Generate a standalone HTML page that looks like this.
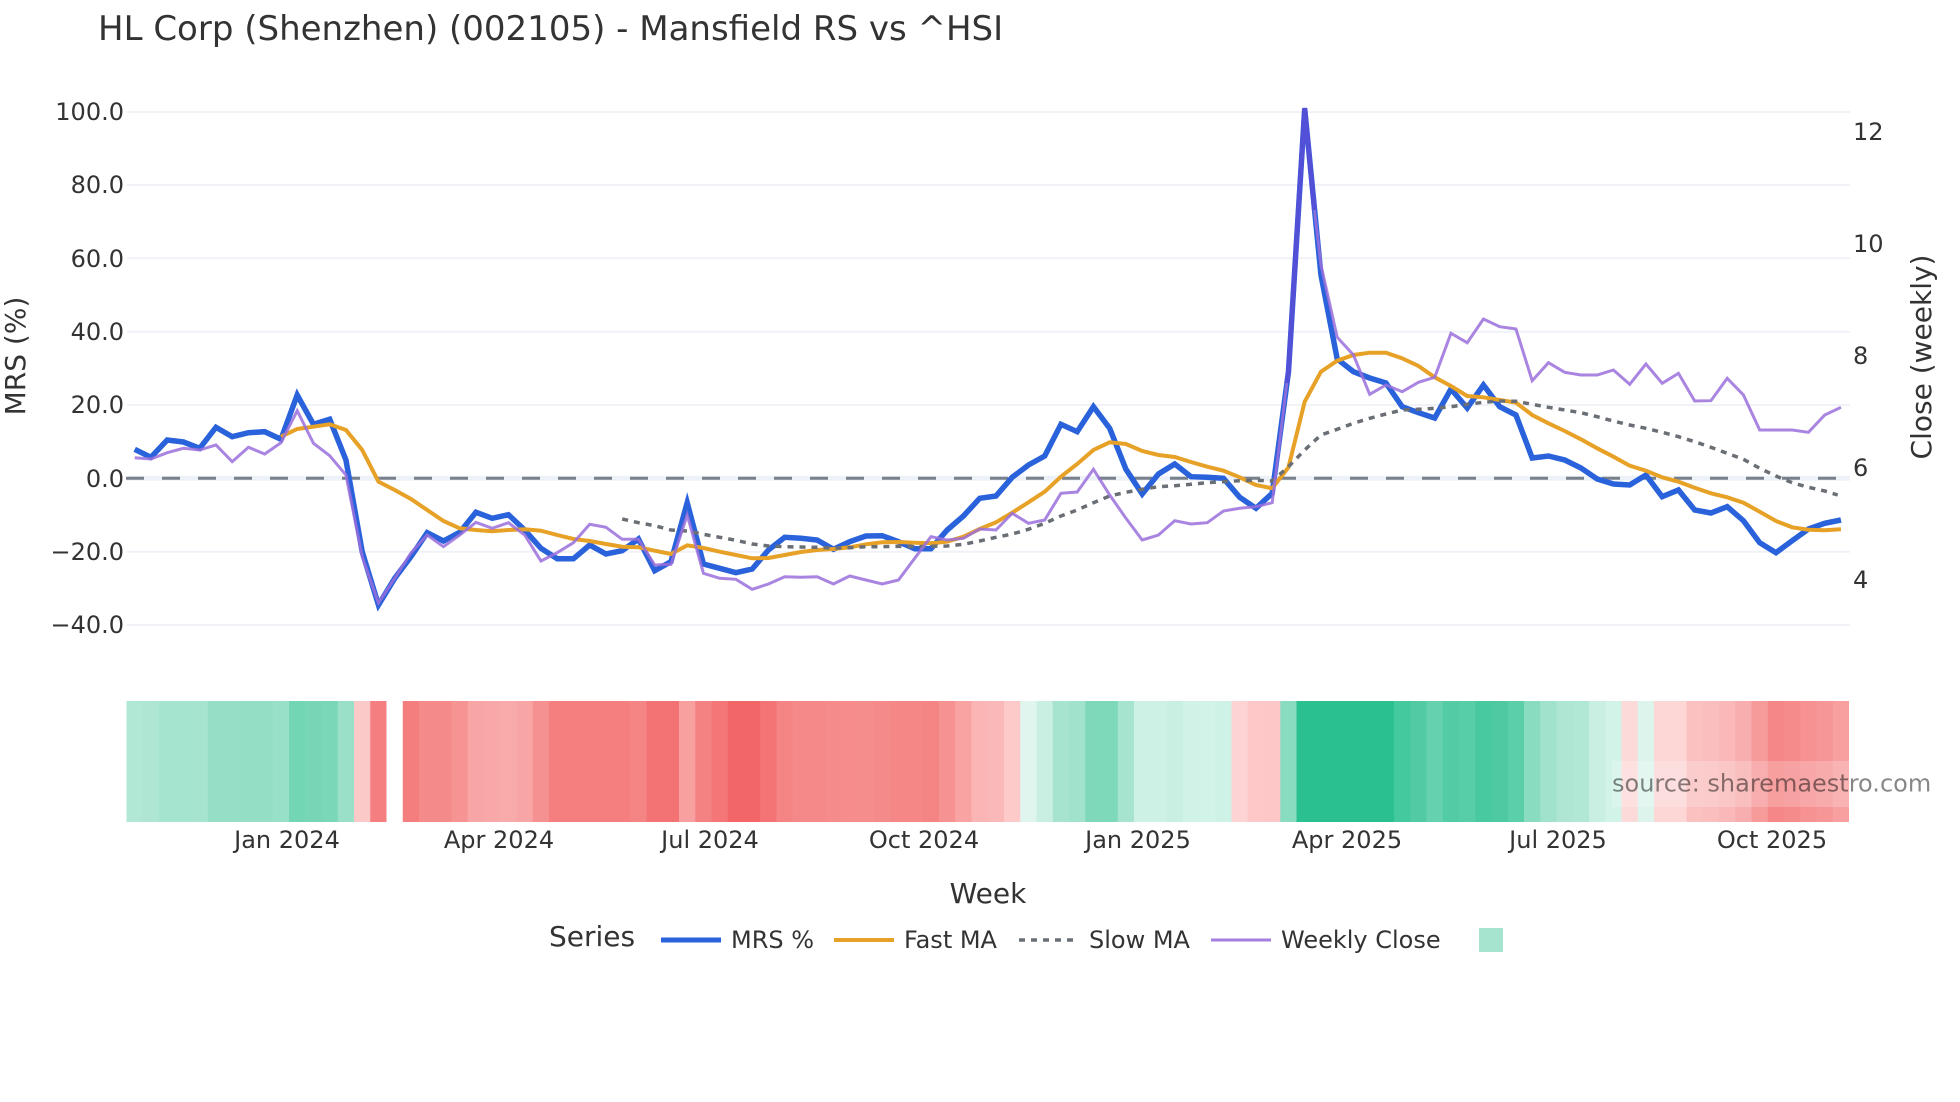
<!DOCTYPE html>
<html><head><meta charset="utf-8"><style>
html,body{margin:0;padding:0;background:#fff;width:1960px;height:1102px;overflow:hidden}
svg{display:block}
text{font-family:"DejaVu Sans","Liberation Sans",sans-serif;fill:#333}
.t{font-size:24px}
.line{fill:none;vector-effect:non-scaling-stroke;stroke-linejoin:miter;stroke-miterlimit:10}
</style></head><body>
<svg width="1960" height="1102" viewBox="0 0 1960 1102" xmlns="http://www.w3.org/2000/svg">
<rect width="1960" height="1102" fill="#fff"/>
<text x="98" y="40" font-size="34">HL Corp (Shenzhen) (002105) - Mansfield RS vs ^HSI</text>
<g stroke="#f0f2f7" stroke-width="2">
<path d="M127 112H1850M127 185H1850M127 258.3H1850M127 331.7H1850M127 405H1850M127 551.7H1850M127 625H1850"/>
</g>
<path d="M127 478.3H1850" stroke="#edf2f9" stroke-width="5"/>
<path d="M126 478.3H1850" stroke="#78808c" stroke-width="3" stroke-dasharray="18 18"/>
<g class="t" text-anchor="end">
<text x="124" y="120">100.0</text>
<text x="124" y="193">80.0</text>
<text x="124" y="267">60.0</text>
<text x="124" y="340">40.0</text>
<text x="124" y="413">20.0</text>
<text x="124" y="487">0.0</text>
<text x="124" y="560">−20.0</text>
<text x="124" y="633">−40.0</text>
</g>
<g class="t">
<text x="1853" y="140">12</text>
<text x="1853" y="252">10</text>
<text x="1853" y="364">8</text>
<text x="1853" y="476">6</text>
<text x="1853" y="588">4</text>
</g>
<text transform="translate(25,356) rotate(-90)" font-size="28" text-anchor="middle">MRS (%)</text>
<text transform="translate(1931,357) rotate(-90)" font-size="28" text-anchor="middle">Close (weekly)</text>

<g transform="translate(126.5,701) scale(16.25,121)">
<rect x="0" width="1.03" height="1" fill="#b0e7d5"/><rect x="1" width="1.03" height="1" fill="#aee6d3"/><rect x="2" width="1.03" height="1" fill="#a5e4cf"/><rect x="3" width="1.03" height="1" fill="#a5e4cf"/><rect x="4" width="1.03" height="1" fill="#a7e4d0"/><rect x="5" width="1.03" height="1" fill="#96dfc6"/><rect x="6" width="1.03" height="1" fill="#96dfc6"/><rect x="7" width="1.03" height="1" fill="#94dec5"/><rect x="8" width="1.03" height="1" fill="#94dec5"/><rect x="9" width="1.03" height="1" fill="#99e0c8"/>
<rect x="10" width="1.03" height="1" fill="#72d5b4"/><rect x="11" width="1.03" height="1" fill="#78d6b7"/><rect x="12" width="1.03" height="1" fill="#7ad7b8"/><rect x="13" width="1.03" height="1" fill="#9ae0c9"/><rect x="14" width="1.03" height="1" fill="#fcc9c9"/><rect x="15" width="1" height="1" fill="#f57f80"/>
<rect x="17" width="1.03" height="1" fill="#f47d7e"/><rect x="18" width="1.03" height="1" fill="#f58a8a"/><rect x="19" width="1.03" height="1" fill="#f58a8a"/><rect x="20" width="1.03" height="1" fill="#f69393"/><rect x="21" width="1.03" height="1" fill="#f8a5a5"/><rect x="22" width="1.03" height="1" fill="#f8a8a8"/><rect x="23" width="1.03" height="1" fill="#f9abab"/><rect x="24" width="1.03" height="1" fill="#f8a5a5"/><rect x="25" width="1.03" height="1" fill="#f69191"/><rect x="26" width="1.03" height="1" fill="#f57f7f"/><rect x="27" width="1.03" height="1" fill="#f57e7e"/><rect x="28" width="1.03" height="1" fill="#f57f7f"/><rect x="29" width="1.03" height="1" fill="#f57f7f"/><rect x="30" width="1.03" height="1" fill="#f57f7f"/><rect x="31" width="1.03" height="1" fill="#f58585"/><rect x="32" width="1.03" height="1" fill="#f37273"/><rect x="33" width="1.03" height="1" fill="#f37273"/><rect x="34" width="1.03" height="1" fill="#f8a0a0"/><rect x="35" width="1.03" height="1" fill="#f58282"/><rect x="36" width="1.03" height="1" fill="#f47677"/><rect x="37" width="1.03" height="1" fill="#f26667"/><rect x="38" width="1.03" height="1" fill="#f26667"/><rect x="39" width="1.03" height="1" fill="#f47475"/><rect x="40" width="1.03" height="1" fill="#f58585"/><rect x="41" width="1.03" height="1" fill="#f58888"/><rect x="42" width="1.03" height="1" fill="#f58888"/><rect x="43" width="1.03" height="1" fill="#f68b8b"/><rect x="44" width="1.03" height="1" fill="#f68c8c"/><rect x="45" width="1.03" height="1" fill="#f68d8d"/><rect x="46" width="1.03" height="1" fill="#f58a8a"/><rect x="47" width="1.03" height="1" fill="#f58787"/><rect x="48" width="1.03" height="1" fill="#f58787"/><rect x="49" width="1.03" height="1" fill="#f58585"/><rect x="50" width="1.03" height="1" fill="#f69292"/><rect x="51" width="1.03" height="1" fill="#f9a3a3"/><rect x="52" width="1.03" height="1" fill="#fbb5b5"/><rect x="53" width="1.03" height="1" fill="#fbb8b8"/><rect x="54" width="1.03" height="1" fill="#fdc9c9"/>
<rect x="55" width="1.03" height="1" fill="#dff5ee"/><rect x="56" width="1.03" height="1" fill="#c8efe2"/><rect x="57" width="1.03" height="1" fill="#a6e4d0"/><rect x="58" width="1.03" height="1" fill="#a0e2cc"/><rect x="59" width="1.03" height="1" fill="#7fd8ba"/><rect x="60" width="1.03" height="1" fill="#7ed8ba"/><rect x="61" width="1.03" height="1" fill="#a6e4d0"/><rect x="62" width="1.03" height="1" fill="#cdf1e5"/><rect x="63" width="1.03" height="1" fill="#cef1e6"/><rect x="64" width="1.03" height="1" fill="#c9efe3"/><rect x="65" width="1.03" height="1" fill="#d0f2e7"/><rect x="66" width="1.03" height="1" fill="#d2f3e8"/><rect x="67" width="1.03" height="1" fill="#cff2e6"/><rect x="68" width="1.03" height="1" fill="#fdd3d3"/><rect x="69" width="1.03" height="1" fill="#fec8c8"/><rect x="70" width="1.03" height="1" fill="#fec7c7"/><rect x="71" width="1.03" height="1" fill="#8adcc0"/>
<rect x="72" width="6.03" height="1" fill="#2bc08f"/><rect x="78" width="1.03" height="1" fill="#44c89d"/><rect x="79" width="1.03" height="1" fill="#52cba5"/><rect x="80" width="1.03" height="1" fill="#66d1af"/><rect x="81" width="1.03" height="1" fill="#53cca6"/><rect x="82" width="1.03" height="1" fill="#57cda8"/><rect x="83" width="1.03" height="1" fill="#48c9a0"/><rect x="84" width="1.03" height="1" fill="#4ec9a2"/><rect x="85" width="1.03" height="1" fill="#5bcfaa"/><rect x="86" width="1.03" height="1" fill="#8adcc0"/><rect x="87" width="1.03" height="1" fill="#a0e2cc"/><rect x="88" width="1.03" height="1" fill="#aee6d3"/><rect x="89" width="1.03" height="1" fill="#b0e7d5"/><rect x="90" width="1.03" height="1" fill="#c9efe3"/><rect x="91" width="1.03" height="1" fill="#d2f3e8"/><rect x="92" width="1.03" height="1" fill="#fddada"/><rect x="93" width="1.03" height="1" fill="#ddf4ec"/><rect x="94" width="1.03" height="1" fill="#fdd6d6"/><rect x="95" width="1.03" height="1" fill="#fdd6d6"/><rect x="96" width="1.03" height="1" fill="#fbc0c0"/><rect x="97" width="1.03" height="1" fill="#fabebe"/><rect x="98" width="1.03" height="1" fill="#fab8b8"/><rect x="99" width="1.03" height="1" fill="#f8aeae"/><rect x="100" width="1.03" height="1" fill="#f79a9a"/><rect x="101" width="1.03" height="1" fill="#f58788"/><rect x="102" width="1.03" height="1" fill="#f58b8b"/><rect x="103" width="1.03" height="1" fill="#f69292"/><rect x="104" width="1.03" height="1" fill="#f79696"/><rect x="105" width="1" height="1" fill="#f8a0a0"/>
</g>
<rect x="1612" y="761" width="238" height="46" fill="#fff" fill-opacity=".2"/>

<g transform="translate(134.7,0) scale(16.25,1)">
<polyline class="line" stroke="#2962db" stroke-width="5.5" points="0,449.3 1,457.3 2,440 3,442 4,448.3 5,427.3 6,436.7 7,432.7 8,431.7 9,439.3 10,395 11,424.3 12,419.3 13,460 14,551.7 15,605 16,578.3 17,556.7 18,532.7 19,541 20,532.3 21,512.3 22,518.3 23,514.7 24,530 25,548.3 26,558.7 27,558.7 28,545 29,554 30,550.7 31,539 32,570.7 33,561.7 34,502.7 35,564 36,568.3 37,572.7 38,569 39,550 40,537.3 41,538.3 42,540 43,549.3 44,541.7 45,536 46,535.7 47,541.7 48,548.7 49,548.7 50,530 51,516 52,498.3 53,496 54,477.3 55,465 56,456 57,424.3 58,431.7 59,406.7 60,428.3 61,469.3 62,494 63,474 64,464 65,476.7 66,477.3 67,478.3 68,497.3 69,508.3 70,493.3 71,372 72,109 73,275 74,359 75,371.7 76,378 77,383 78,406.7 79,412.7 80,418 81,389 82,408 83,385 84,406.7 85,415 86,458 87,456 88,460 89,468 90,479 91,484 92,485 93,475 94,496.7 95,490 96,510 97,513 98,506.7 99,520.7 100,542.7 101,552.7 102,540.7 103,529 104,523.3 105,520"/>
<polyline class="line" stroke="#e6a126" stroke-width="4" points="9,436.7 10,429 11,426.7 12,424.3 13,430 14,450 15,481.7 16,490 17,499 18,510 19,521 20,528.3 21,530 22,531.3 23,530 24,529.3 25,530.7 26,535 27,539 28,541 29,544 30,546.7 31,547.3 32,550.7 33,554 34,545.3 35,548 36,551.7 37,555 38,558.3 39,558 40,555 41,552 42,550 43,549 44,547.3 45,544.3 46,542.3 47,542 48,542.7 49,543.3 50,541.7 51,536.7 52,529 53,522.3 54,512.7 55,502.3 56,491.7 57,476.7 58,464 59,450 60,442.3 61,444 62,451 63,455 64,457 65,462 66,466.7 67,470.7 68,477.3 69,485 70,488.3 71,467.3 72,401.7 73,371.7 74,360.7 75,355 76,352.7 77,352.7 78,358.3 79,366 80,377.3 81,386 82,396 83,397.3 84,400 85,402.7 86,415 87,423.3 88,431 89,439.3 90,448.3 91,456.7 92,465.7 93,470.7 94,477.3 95,481.7 96,487.7 97,493.3 98,497.3 99,502.7 100,511.7 101,521 102,527.3 103,529.7 104,530.3 105,529.3"/>
<polyline class="line" stroke="#6a6e75" stroke-width="3.5" stroke-dasharray="6 6" points="30,519 31,522.7 32,525.7 33,530 34,531 35,534.3 36,537.3 37,540.3 38,544 39,546 40,546.7 41,547 42,547.3 43,548 44,547.7 45,546.7 46,546.7 47,546.3 48,546.7 49,546.3 50,546 51,544.3 52,541 53,537.3 54,534 55,529.3 56,523.3 57,516 58,510 59,502.7 60,496 61,492.3 62,489.3 63,486.7 64,485.7 65,484.3 66,482.7 67,481.7 68,480.7 69,480.3 70,481 71,466.7 72,450 73,435 74,429.3 75,423.3 76,418.3 77,414 78,410 79,409.3 80,408.3 81,406.7 82,404.3 83,402.3 84,401 85,401.3 86,404.3 87,407.3 88,410 89,412.7 90,416.7 91,421 92,425 93,428.3 94,432.3 95,436.7 96,441.7 97,447.3 98,453.3 99,459.3 100,468.3 101,476 102,482.7 103,487.3 104,491 104.8,495"/>
<polyline class="line" stroke="#5350d8" stroke-width="5" points="70.9,383 71,372 72,108 72.6,210"/>
<polyline class="line" stroke="#9a70dc" stroke-opacity=".85" stroke-width="3" points="0,457.7 1,459 2,452.7 3,448.3 4,450 5,445 6,461.7 7,447.3 8,454 9,442.7 10,410.7 11,443.3 12,455.7 13,475 14,556.7 15,603 16,578.3 17,553 18,535 19,546.7 20,535 21,522.3 22,528.3 23,522.7 24,535 25,561 26,552.7 27,542.7 28,524.3 29,527.3 30,539.3 31,539.3 32,565 33,564.3 34,515 35,573.3 36,578.3 37,579.3 38,589.3 39,584 40,576.7 41,577.3 42,576.7 43,584 44,576 45,580 46,584 47,580 48,558.3 49,536.7 50,540 51,538.3 52,529 53,530 54,513.3 55,523.3 56,520 57,493.3 58,492 59,469.3 60,495 61,518.3 62,540 63,535 64,520.7 65,524 66,522.7 67,511 68,508.3 69,506.7 70,502.7 70.9,383"/>
<polyline class="line" stroke="#9a70dc" stroke-opacity=".85" stroke-width="3" points="72.6,210 73,265 74,337.3 75,355 76,394.3 77,385 78,391.7 79,382.3 80,377.3 81,333.3 82,342.7 83,319 84,326.7 85,329 86,380.7 87,362.7 88,372.3 89,375 90,375 91,370 92,384.3 93,364 94,383.3 95,373.3 96,401 97,400.7 98,378.3 99,395 100,430 101,430 102,430 103,432.3 104,415 105,407.3"/>
</g>

<text x="1612" y="791.5" font-size="24" style="fill:#000;fill-opacity:.47">source: sharemaestro.com</text>

<g class="t" text-anchor="middle">
<text x="287" y="848">Jan 2024</text>
<text x="499" y="848">Apr 2024</text>
<text x="710" y="848">Jul 2024</text>
<text x="924" y="848">Oct 2024</text>
<text x="1138" y="848">Jan 2025</text>
<text x="1347" y="848">Apr 2025</text>
<text x="1558" y="848">Jul 2025</text>
<text x="1772" y="848">Oct 2025</text>
</g>
<text x="988" y="903" font-size="28" text-anchor="middle">Week</text>
<text x="549" y="946" font-size="28">Series</text>
<path d="M661 940H721" stroke="#2962db" stroke-width="5"/>
<text x="731" y="948" class="t">MRS %</text>
<path d="M834 940H894" stroke="#e6a126" stroke-width="4"/>
<text x="904" y="948" class="t">Fast MA</text>
<path d="M1019 940H1076" stroke="#6a6e75" stroke-width="3.5" stroke-dasharray="6 6"/>
<text x="1089" y="948" class="t">Slow MA</text>
<path d="M1211 940H1271" stroke="#a57fe0" stroke-width="3"/>
<text x="1281" y="948" class="t">Weekly Close</text>
<rect x="1479" y="928" width="24" height="24" fill="#a7e4d0"/>
</svg>
</body></html>
